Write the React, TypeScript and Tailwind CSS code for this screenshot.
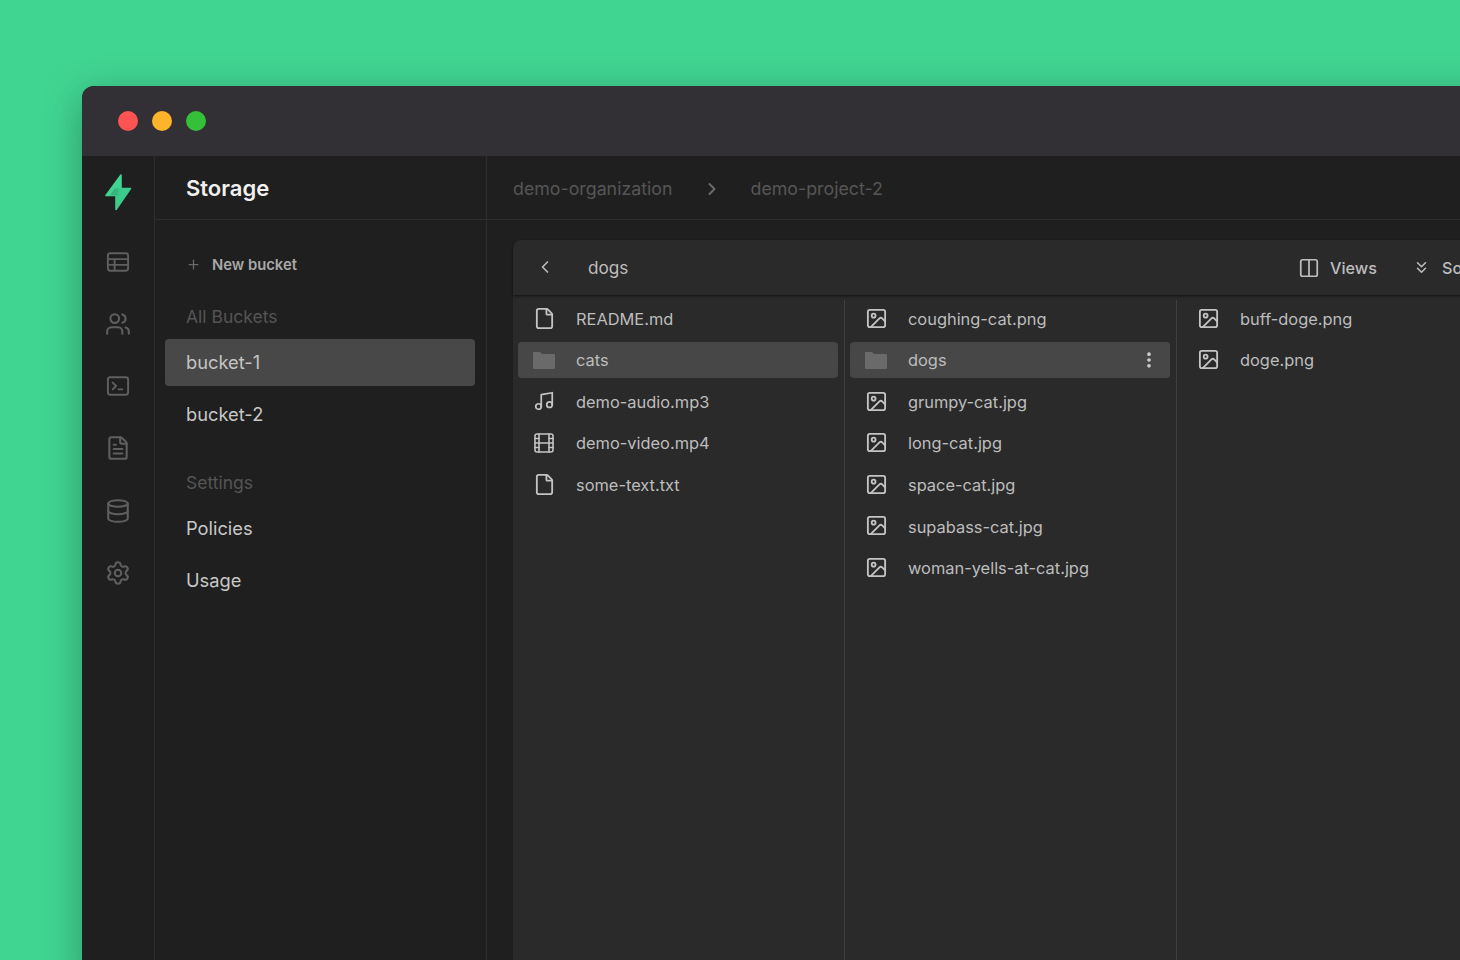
import {
  ChevronLeft,
  ChevronRight,
  ChevronsDown,
  Columns2,
  Database,
  File,
  FileText,
  Film,
  Image,
  MoreVertical,
  Music,
  Plus,
  Settings,
  Users,
} from 'lucide-react';
import type { ReactNode } from 'react';

type Row = { name: string; icon: ReactNode; active?: boolean; menu?: boolean };

const fileIcon = <File size={23} strokeWidth={1.9} />;
const imageIcon = <Image size={23} strokeWidth={1.9} />;

function FolderIcon() {
  return (
    <svg width="22" height="18" viewBox="0 0 22 18" fill="#6a6a6a">
      <path d="M0 2a1 1 0 0 1 1-1h6l2 2h12a1 1 0 0 1 1 1v13a1 1 0 0 1-1 1H1a1 1 0 0 1-1-1z" />
    </svg>
  );
}

function Logo() {
  return (
    <svg width="28" height="38" viewBox="0 0 28 38" strokeLinejoin="round">
      <path d="M17 2 L2 22.5 H14.5 L17 16 Z" fill="#3fd492" stroke="#3fd492" strokeWidth="1.6" />
      <path d="M12 36.5 L26.5 15.5 H14 L12 22 Z" fill="#3ccb8b" stroke="#3ccb8b" strokeWidth="1.6" />
      <path d="M14 15.5 L14.5 22.5 L6 22.5 L10.5 15.5 Z" fill="#36b57d" />
    </svg>
  );
}

function TableIcon() {
  return (
    <svg width="26" height="26" viewBox="0 0 27 27" fill="none" stroke="currentColor" strokeWidth="2">
      <rect x="3" y="4.5" width="21" height="18" rx="2.5" />
      <path d="M3 10.5h21M3 16.5h21M10 10.5v12" />
    </svg>
  );
}

function TerminalIcon() {
  return (
    <svg width="26" height="26" viewBox="0 0 27 27" fill="none" stroke="currentColor" strokeWidth="2" strokeLinecap="round" strokeLinejoin="round">
      <rect x="3" y="4.5" width="21" height="18" rx="2.5" />
      <path d="M8 10l3.5 3.5L8 17M14 17h4" />
    </svg>
  );
}

const columns: Row[][] = [
  [
    { name: 'README.md', icon: fileIcon },
    { name: 'cats', icon: <FolderIcon />, active: true },
    { name: 'demo-audio.mp3', icon: <Music size={22} strokeWidth={1.9} /> },
    { name: 'demo-video.mp4', icon: <Film size={26} strokeWidth={1.6} /> },
    { name: 'some-text.txt', icon: fileIcon },
  ],
  [
    { name: 'coughing-cat.png', icon: imageIcon },
    { name: 'dogs', icon: <FolderIcon />, active: true, menu: true },
    { name: 'grumpy-cat.jpg', icon: imageIcon },
    { name: 'long-cat.jpg', icon: imageIcon },
    { name: 'space-cat.jpg', icon: imageIcon },
    { name: 'supabass-cat.jpg', icon: imageIcon },
    { name: 'woman-yells-at-cat.jpg', icon: imageIcon },
  ],
  [
    { name: 'buff-doge.png', icon: imageIcon },
    { name: 'doge.png', icon: imageIcon },
  ],
];

function SideItem({ label, active }: { label: string; active?: boolean }) {
  return (
    <div
      className={
        'flex h-[47px] items-center rounded px-[21px] text-[18.3px] ' +
        (active ? 'bg-[#484848] text-[#c4c4c4]' : 'text-[#c8c8c8]')
      }
    >
      {label}
    </div>
  );
}

export default function App() {
  return (
    <div className="h-[960px] w-[1460px] overflow-hidden bg-[#41d592] pl-[82px] pt-[86px] font-['Inter',sans-serif]">
      <div className="flex h-[900px] w-[1500px] flex-col overflow-hidden rounded-tl-[12px] bg-[#1f1f1f] shadow-[0_10px_40px_rgba(0,0,0,0.3)]">
        {/* Title bar */}
        <div className="flex h-[70px] shrink-0 items-center gap-[14px] bg-[#323035] pl-[36px]">
          <span className="h-5 w-5 rounded-full bg-[#fd5353]" />
          <span className="h-5 w-5 rounded-full bg-[#fdb32a]" />
          <span className="h-5 w-5 rounded-full bg-[#34c038]" />
        </div>

        <div className="flex flex-1">
          {/* Icon rail */}
          <div className="flex w-[73px] shrink-0 flex-col items-center border-r border-[#2e2e2e] pt-[17px] text-[#5f5f5f]">
            <Logo />
            <div className="mt-[37.5px] flex flex-col items-center gap-[36.3px]">
              <TableIcon />
              <Users size={26} strokeWidth={1.9} />
              <TerminalIcon />
              <FileText size={26} strokeWidth={1.9} />
              <Database size={26} strokeWidth={1.9} />
              <Settings size={26} strokeWidth={1.9} />
            </div>
          </div>

          {/* Storage sidebar */}
          <div className="flex w-[332px] shrink-0 flex-col border-r border-[#2e2e2e]">
            <div className="flex h-[64px] items-center border-b border-[#2e2e2e] pl-[31px] pt-[2px] text-[22px] font-semibold text-[#f0f0f0]">
              Storage
            </div>
            <div className="flex flex-col pl-[10px] pr-[11px]">
              <div className="mt-[33.5px] flex items-center gap-[11px] pl-[21px] text-[14.8px] font-semibold text-[#a8a8a8]">
                <Plus size={15} className="text-[#6a6a6a]" />
                New bucket
              </div>
              <div className="mt-[28px] pl-[21px] text-[17.5px] text-[#555555]">All Buckets</div>
              <div className="mt-[9px] flex flex-col gap-[5px]">
                <SideItem label="bucket-1" active />
                <SideItem label="bucket-2" />
              </div>
              <div className="mt-[32px] pl-[21px] text-[17.5px] text-[#555555]">Settings</div>
              <div className="mt-[9px] flex flex-col gap-[5px]">
                <SideItem label="Policies" />
                <SideItem label="Usage" />
              </div>
            </div>
          </div>

          {/* Main */}
          <div className="flex min-w-0 flex-1 flex-col">
            <div className="flex h-[64px] shrink-0 items-center border-b border-[#2e2e2e] pl-[26px] pt-[3px] text-[17.8px] text-[#565656]">
              <span>demo-organization</span>
              <ChevronRight size={20} strokeWidth={2.5} className="mx-[29px] text-[#6a6a6a]" />
              <span>demo-project-2</span>
            </div>

            <div className="flex-1 pl-[26px] pt-[20px]">
              <div className="flex h-full flex-col rounded-tl-[8px] bg-[#2a2a2a]">
                <div className="flex h-[55px] shrink-0 items-center justify-between rounded-tl-[8px] pl-[22px] pr-[90px] shadow-[0_1px_3px_rgba(0,0,0,0.6)]">
                  <div className="flex items-center text-[17.2px] text-[#bdbdbd]">
                    <ChevronLeft size={20} strokeWidth={2} />
                    <span className="ml-[33px] pt-[1px]">dogs</span>
                  </div>
                  <div className="flex items-center pt-[1px] text-[16.2px] font-medium text-[#bdbdbd]">
                    <Columns2 size={22} strokeWidth={1.9} />
                    <span className="ml-[10px]">Views</span>
                    <ChevronsDown size={19} strokeWidth={2} className="ml-[35px]" />
                    <span className="ml-[11px] w-[50px]">Sort</span>
                  </div>
                </div>

                <div className="flex flex-1 pt-[5px]">
                  {columns.map((rows, i) => (
                    <div key={i} className="flex w-[332px] shrink-0 flex-col gap-[5.6px] border-r border-[#404040] pl-[5px] pr-[6px]">
                      {rows.map((row) => (
                        <div
                          key={row.name}
                          className={
                            'flex h-9 items-center rounded pl-[14px] pr-[11px] text-[16.4px] ' +
                            (row.active ? 'bg-[#474747] text-[#bdbdbd]' : 'text-[#bdbdbd]')
                          }
                        >
                          <span className="flex w-[24px] justify-center text-[#c4c4c4]">{row.icon}</span>
                          <span className="ml-[20px] flex-1 pt-[2px]">{row.name}</span>
                          {row.menu && <MoreVertical size={20} strokeWidth={2.4} className="text-[#d0d0d0]" />}
                        </div>
                      ))}
                    </div>
                  ))}
                </div>
              </div>
            </div>
          </div>
        </div>
      </div>
    </div>
  );
}
